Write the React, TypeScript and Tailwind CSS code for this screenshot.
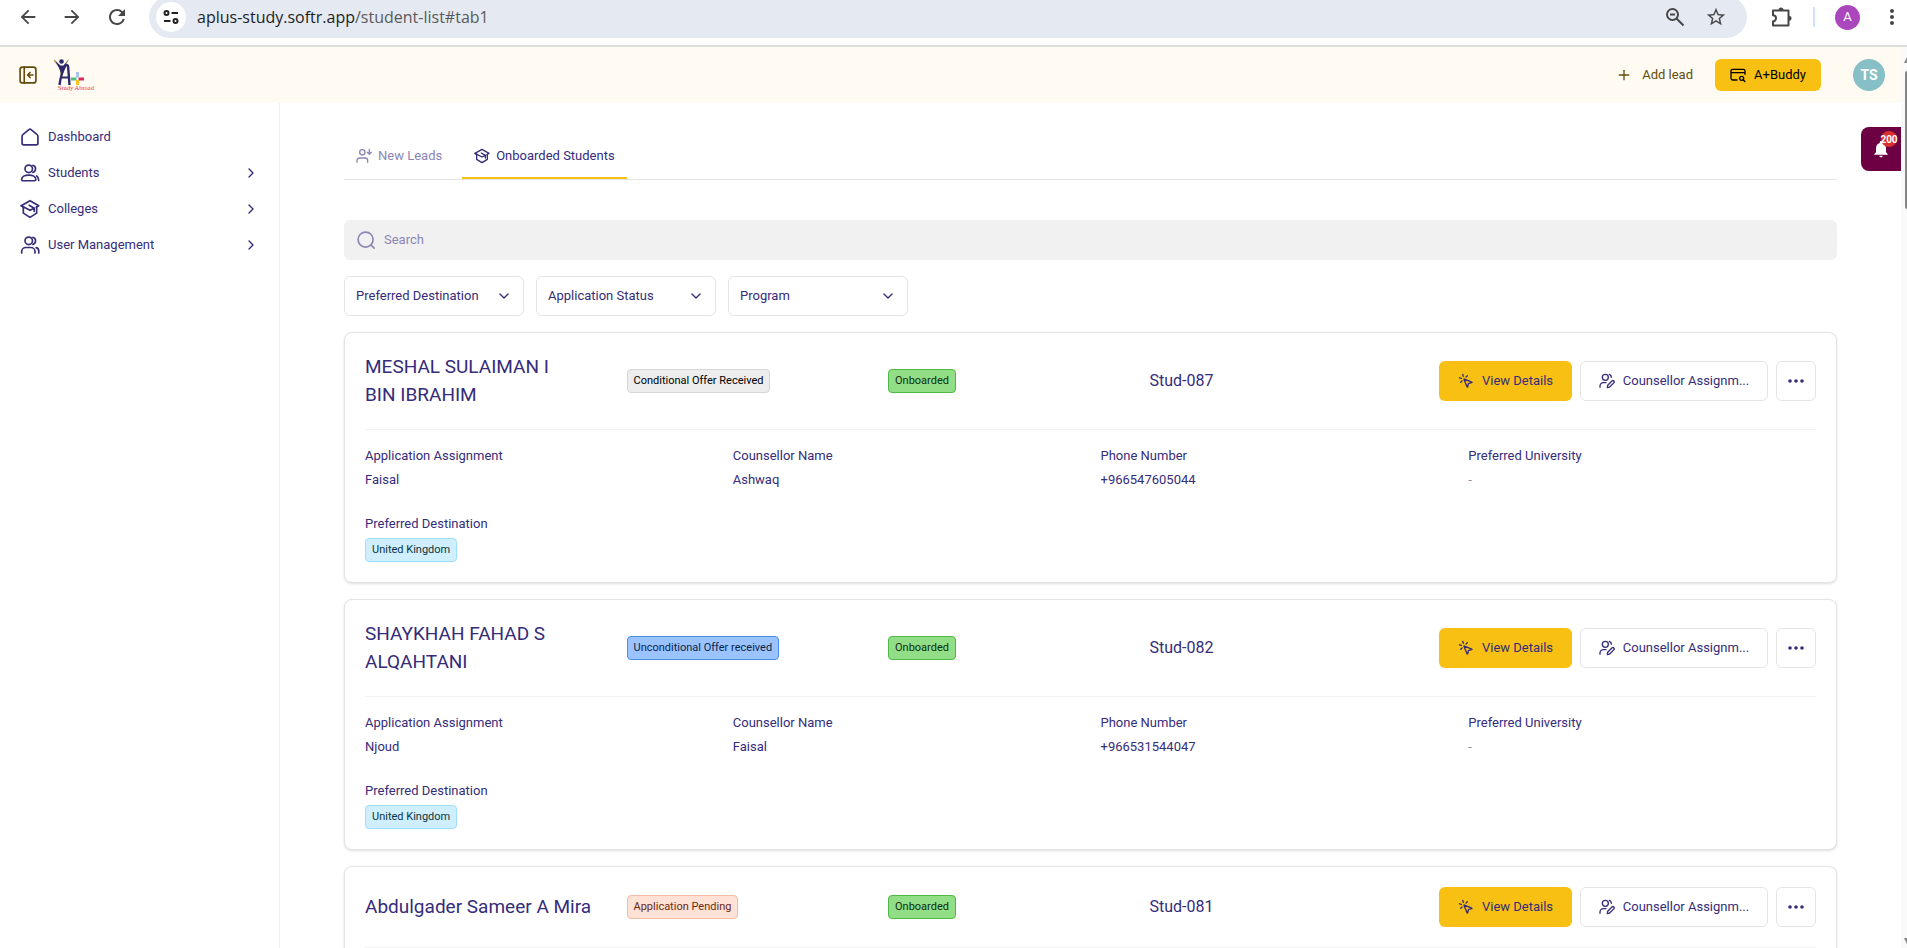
import { useState, type ReactNode } from 'react'
import { ChevronDown, ChevronRight, MousePointerClick, Plus } from 'lucide-react'
import { MdArrowBack, MdArrowForward, MdMoreVert, MdNotifications, MdRefresh, MdStarOutline } from 'react-icons/md'

type Tone = 'gray' | 'blue' | 'orange' | 'green' | 'cyan'

interface Student {
  id: string
  name: string
  status: string
  tone: Tone
  fields: [string, string][]
  destination?: string
}

const students: Student[] = [
  {
    id: 'Stud-087',
    name: 'MESHAL SULAIMAN I\nBIN IBRAHIM',
    status: 'Conditional Offer Received',
    tone: 'gray',
    fields: [
      ['Application Assignment', 'Faisal'],
      ['Counsellor Name', 'Ashwaq'],
      ['Phone Number', '+966547605044'],
      ['Preferred University', '-']
    ],
    destination: 'United Kingdom'
  },
  {
    id: 'Stud-082',
    name: 'SHAYKHAH FAHAD S\nALQAHTANI',
    status: 'Unconditional Offer received',
    tone: 'blue',
    fields: [
      ['Application Assignment', 'Njoud'],
      ['Counsellor Name', 'Faisal'],
      ['Phone Number', '+966531544047'],
      ['Preferred University', '-']
    ],
    destination: 'United Kingdom'
  },
  {
    id: 'Stud-081',
    name: 'Abdulgader Sameer A Mira',
    status: 'Application Pending',
    tone: 'orange',
    fields: []
  }
]

const tones: Record<Tone, string> = {
  gray: 'border-[#d6d6d6] bg-[#ededed] text-black',
  blue: 'border-[#4a8ee8] bg-[#9ac3ff] text-[#0c2348]',
  orange: 'border-[#f1bda6] bg-[#ffe1d5] text-[#6b2a12]',
  green: 'border-[#4fb845] bg-[#92de87] text-[#0f2c0c]',
  cyan: 'border-[#9edffa] bg-[#cfefff] text-[#0b3442]'
}

const filters = ['Preferred Destination', 'Application Status', 'Program']

interface IconProps {
  className?: string
  children?: ReactNode
}

const Icon = ({ className = 'size-5', children }: IconProps) => (
  <svg
    className={'shrink-0 ' + className}
    viewBox="0 0 24 24"
    fill="none"
    stroke="currentColor"
    strokeWidth="2"
    strokeLinecap="round"
    strokeLinejoin="round"
    aria-hidden="true"
  >
    {children}
  </svg>
)

const HomeIcon = () => (
  <Icon>
    <path d="M2.5 11.2c0-1 .4-1.8 1.2-2.4l7-5.6a2 2 0 0 1 2.6 0l7 5.6c.8.6 1.2 1.4 1.2 2.4v8.3a2 2 0 0 1-2 2h-15a2 2 0 0 1-2-2z" />
  </Icon>
)

const StudentsIcon = () => (
  <Icon>
    <circle cx="10.5" cy="7" r="4.5" />
    <path d="M15.5 2.7a4.500 4.500 0 0 1 0 8.600" />
    <path d="M2 19.500c0-3 3.600-5 8.500-5s8.500 2 8.500 5c0 1.200-.6 1.800-1.600 1.800H3.600c-1 0-1.600-.6-1.600-1.800z" />
    <path d="M20 15.500c1.500.9 2.500 2.400 2.500 5.500" />
  </Icon>
)

const UsersIcon = () => (
  <Icon>
    <circle cx="10.5" cy="7" r="4.5" />
    <path d="M15.500 2.700a4.500 4.500 0 0 1 0 8.600" />
    <path d="M2 21.500v-1.500a5 5 0 0 1 5-5h6a5 5 0 0 1 5 5v1.500" />
    <path d="M19.500 15.200a4 4 0 0 1 3 4v2.300" />
  </Icon>
)

const CapIcon = ({ className }: IconProps) => (
  <Icon className={className}>
    <path d="M4 9.500 1.500 8 12 2l10.500 6-3 1.800" />
    <path d="M1.500 8 12 13.500l5-2.500v4" />
    <path d="M11 7.500l6 3.500" />
    <path d="M4 9.500V17l8 5 8-5V9.500" />
  </Icon>
)

const NewLeadIcon = () => (
  <Icon className="size-4">
    <circle cx="9.5" cy="6.5" r="4" />
    <path d="M1.500 21.500v-2.500a4 4 0 0 1 4-4h8a4 4 0 0 1 4 4v2.500" />
    <path d="M20 2v7M17 6.500l3 3 3-3" />
  </Icon>
)

const UserPenIcon = () => (
  <Icon className="size-4">
    <circle cx="9.5" cy="6.5" r="4.5" />
    <path d="M15.500 2.200c2 .8 3 2.400 3 4.300" />
    <path d="M1.500 21.500v-2a5 5 0 0 1 5-5h4" />
    <path d="M12.500 21.800l.6-3.500 6.300-6.300a1.900 1.900 0 0 1 2.800 2.800l-6.300 6.300z" />
  </Icon>
)

const BuddyIcon = () => (
  <Icon className="size-4">
    <path d="M10.500 19.500H4a2.500 2.500 0 0 1-2.500-2.500V6A2.500 2.500 0 0 1 4 3.500h16A2.500 2.500 0 0 1 22.500 6v5M1.500 8.500h21" />
    <circle cx="17.5" cy="17" r="3" />
    <path d="M19.800 19.200l2.500 2.500" />
  </Icon>
)

const PanelIcon = () => (
  <Icon>
    <rect x="2.5" y="2.5" width="19" height="19" rx="3" />
    <path d="M7.500 2.500v19M18 12h-6M14.500 9l-3 3 3 3" />
  </Icon>
)

const SearchIcon = () => (
  <Icon>
    <circle cx="11.5" cy="11.5" r="9" />
    <path d="M18.500 18.500l3.200 3.200" />
  </Icon>
)

const Logo = () => (
  <svg className="h-8 w-10" viewBox="0 0 40 32" role="img" aria-label="A+ Study Abroad">
    <path d="M0 1l6.500 8 1 8" fill="none" stroke="#c9a76a" strokeWidth="1.5" />
    <path d="M1 1.500l5.500 5h3L14 1l-3 7.500-2.500 6-1 3.500-1-5-1.500-4z" fill="#2c2a6b" />
    <path d="M14.500.5l-4 7.500" fill="none" stroke="#c9a76a" />
    <circle cx="7.5" cy="2.5" r="2.3" fill="#2c2a6b" />
    <path
      d="M5.500 26c1-8 3.500-15 6-19.500 1.200-1 2.400-.6 2.600 1L15.500 26"
      fill="none"
      stroke="#2c2a6b"
      strokeWidth="2.4"
    />
    <path d="M7.500 18.500h7" stroke="#2c2a6b" strokeWidth="2" />
    <path d="M23.500 13v5.500" stroke="#a9c3ee" strokeWidth="3" />
    <path d="M17 20h5.500" stroke="#4fbf86" strokeWidth="3" />
    <path d="M24.500 20H30" stroke="#dc2a55" strokeWidth="3" />
    <path d="M23.500 21v5" stroke="#f8c21c" strokeWidth="3" />
    <text x="4" y="31" fontSize="6.5" fill="#e5303c" fontFamily="Liberation Serif, serif">
      Study Abroad
    </text>
  </svg>
)

const Badge = ({ tone, children }: { tone: Tone; children: ReactNode }) => (
  <span
    className={
      'inline-flex h-6 items-center justify-self-start rounded-sm border px-1.5 text-[11px] whitespace-nowrap ' +
      tones[tone]
    }
  >
    {children}
  </span>
)

const BrowserBar = () => (
  <div className="flex h-[47px] shrink-0 items-start overflow-hidden border-b-2 border-[#dcdedb] bg-white pr-[3px] text-[#474747]">
    <div className="flex h-[34px] items-center gap-[22px] pl-[17px]">
      <button aria-label="Back">
        <MdArrowBack className="size-[22px]" />
      </button>
      <button aria-label="Forward">
        <MdArrowForward className="size-[22px]" />
      </button>
      <button aria-label="Reload">
        <MdRefresh className="size-6" />
      </button>
    </div>
    <div className="-mt-1 ml-5 flex h-[42px] grow items-center rounded-full bg-[#e4e9f2] pr-5 pl-[7px]">
      <button
        aria-label="Site information"
        className="flex size-[30px] items-center justify-center rounded-full bg-white text-[#222]"
      >
        <svg className="size-4" viewBox="0 0 16 16" fill="none" stroke="currentColor" strokeWidth="2">
          <circle cx="3.5" cy="4" r="2" />
          <path d="M8.500 4H15M1 12h6.500" />
          <circle cx="12.5" cy="12" r="2" />
        </svg>
      </button>
      <span className="ml-[11px] grow font-['Open_Sans',sans-serif] text-base text-[#5a5a5a]">
        <span className="text-[#1f1f1f]">aplus-study.softr.app</span>/student-list#tab1
      </span>
      <button aria-label="Zoom" className="mr-5">
        <svg className="size-5" viewBox="0 0 20 20" fill="none" stroke="currentColor" strokeWidth="2">
          <circle cx="7.5" cy="7.5" r="5.5" />
          <path d="M5 7.500h5M11.500 11.500l7 7" />
        </svg>
      </button>
      <button aria-label="Bookmark">
        <MdStarOutline className="size-[22px]" />
      </button>
    </div>
    <div className="flex h-[34px] items-center pl-6">
      <button aria-label="Extensions">
        <svg className="size-[22px]" viewBox="0 0 22 22" fill="none">
          <path
            d="M2 4.500h15.500v15H2v-4.200a3 3 0 0 0 0-6z"
            stroke="currentColor"
            strokeWidth="2"
            strokeLinejoin="round"
          />
          <path d="M7.500 4a2.500 2.500 0 0 1 5 0zM18 9.800a2.500 2.500 0 0 1 0 5z" fill="currentColor" />
        </svg>
      </button>
      <span className="mx-5 h-5 w-0.5 bg-[#cfe0fc]"></span>
      <button className="flex size-[25px] items-center justify-center rounded-full bg-[#ab47bc] text-[13px] text-white">
        A
      </button>
      <button aria-label="Menu" className="ml-5">
        <MdMoreVert className="size-6" />
      </button>
    </div>
  </div>
)

const NavLink = ({ icon, label, nested }: { icon: ReactNode; label: string; nested?: boolean }) => (
  <a href="#" className="flex h-9 items-center gap-2 px-5">
    {icon}
    <span className="grow">{label}</span>
    {nested && <ChevronRight className="size-4" />}
  </a>
)

const StudentCard = ({ student }: { student: Student }) => (
  <article className="shrink-0 rounded-lg border border-[#e4e4e4] bg-white px-5 shadow-sm">
    <div className="flex items-center gap-12 border-b border-[#f3f3f3] py-5">
      <div className="grid grow grid-cols-4 items-center gap-5">
        <h2 className="text-[19px] leading-7 whitespace-pre">{student.name}</h2>
        <Badge tone={student.tone}>{student.status}</Badge>
        <Badge tone="green">Onboarded</Badge>
        <span className="text-base">{student.id}</span>
      </div>
      <div className="flex gap-2">
        <button className="flex h-10 w-[133px] items-center justify-center gap-2 rounded-md bg-[#f8c013]">
          <MousePointerClick className="size-4" />
          View Details
        </button>
        <button className="flex h-10 w-[188px] items-center justify-center gap-2 rounded-md border border-[#e4e4e4]">
          <UserPenIcon />
          Counsellor Assignm...
        </button>
        <button
          aria-label="More actions"
          className="flex size-10 items-center justify-center rounded-md border border-[#e4e4e4]"
        >
          <svg className="size-4" viewBox="0 0 16 16" fill="currentColor">
            <circle cx="2" cy="8" r="1.8" />
            <circle cx="8" cy="8" r="1.8" />
            <circle cx="14" cy="8" r="1.8" />
          </svg>
        </button>
      </div>
    </div>
    <dl className="grid grid-cols-4 gap-x-5 gap-y-6 pt-4 pb-5 leading-5">
      {student.fields.map(([label, value]) => (
        <div key={label} className="flex flex-col gap-1">
          <dt>{label}</dt>
          <dd className={value === '-' ? 'text-[#8d88b0]' : ''}>{value}</dd>
        </div>
      ))}
      {student.destination && (
        <div className="flex flex-col gap-1">
          <dt>Preferred Destination</dt>
          <dd className="flex">
            <Badge tone="cyan">{student.destination}</Badge>
          </dd>
        </div>
      )}
    </dl>
  </article>
)

function App() {
  const [tab, setTab] = useState('onboarded')
  const [search, setSearch] = useState('')

  const tabClass = (name: string): string =>
    'flex h-11 items-center gap-1.5 border-b-2 px-3 ' +
    (tab === name ? 'border-[#f8c013]' : 'border-transparent text-[#8b86b3]')

  return (
    <div className="flex h-screen flex-col overflow-hidden bg-white font-[Roboto,sans-serif] text-[13px] text-[#352c7a]">
      <BrowserBar />
      <div className="flex min-h-0 grow">
        <div className="relative flex min-w-0 grow flex-col">
          <header className="flex h-14 shrink-0 items-center bg-[#fffbf2] pr-4 pl-[18px] text-[#634c0c]">
            <button aria-label="Collapse menu">
              <PanelIcon />
            </button>
            <a href="#" className="ml-4 grow">
              <Logo />
            </a>
            <button className="flex items-center gap-2.5">
              <Plus className="size-4" />
              Add lead
            </button>
            <button className="ml-[22px] flex h-8 w-[106px] items-center justify-center gap-2 rounded-md bg-[#f8c013] text-black">
              <BuddyIcon />
              A+Buddy
            </button>
            <button className="ml-8 flex size-8 items-center justify-center rounded-full bg-[#86c0c6] text-sm font-bold text-white">
              TS
            </button>
          </header>

          <div className="flex min-h-0 grow">
            <nav className="w-[280px] shrink-0 border-r border-[#efefef] pt-4">
              <NavLink icon={<HomeIcon />} label="Dashboard" />
              <NavLink icon={<StudentsIcon />} label="Students" nested />
              <NavLink icon={<CapIcon />} label="Colleges" nested />
              <NavLink icon={<UsersIcon />} label="User Management" nested />
            </nav>

            <main className="flex min-w-0 grow flex-col gap-4 px-16 pt-8">
              <div className="mb-6 flex shrink-0 gap-2 border-b border-[#e4e4e4]" role="tablist">
                <button
                  role="tab"
                  aria-selected={tab === 'leads'}
                  className={tabClass('leads')}
                  onClick={() => setTab('leads')}
                >
                  <NewLeadIcon />
                  New Leads
                </button>
                <button
                  role="tab"
                  aria-selected={tab === 'onboarded'}
                  className={tabClass('onboarded')}
                  onClick={() => setTab('onboarded')}
                >
                  <CapIcon className="size-4" />
                  Onboarded Students
                </button>
              </div>

              <label className="flex h-10 shrink-0 items-center gap-2 rounded-md bg-[#f1f1f1] px-3 text-[#8b86b3]">
                <SearchIcon />
                <input
                  type="search"
                  aria-label="Search"
                  placeholder="Search"
                  className="grow bg-transparent outline-none placeholder:text-[#8b86b3]"
                  value={search}
                  onChange={(e) => setSearch(e.target.value)}
                />
              </label>

              <div className="flex shrink-0 gap-3">
                {filters.map((name) => (
                  <div key={name} className="relative flex w-[180px] items-center">
                    <select
                      aria-label={name}
                      className="h-10 w-full appearance-none rounded-md border border-[#e4e4e4] bg-white pr-8 pl-[11px]"
                    >
                      <option>{name}</option>
                    </select>
                    <ChevronDown className="pointer-events-none absolute right-3 size-4" />
                  </div>
                ))}
              </div>

              {students.map((student) => (
                <StudentCard key={student.id} student={student} />
              ))}
            </main>
          </div>

          <button
            aria-label="Notifications"
            className="absolute top-20 right-0 flex h-11 w-10 items-center justify-center rounded-l-lg bg-[#6c0042] text-white"
          >
            <MdNotifications className="size-5" />
            <span className="absolute top-1 right-1 flex size-4 items-center justify-center rounded-full bg-[#d93030] text-[10px] font-bold">
              200
            </span>
          </button>
        </div>

        <div className="flex w-1.5 shrink-0 flex-col items-end bg-[#fafafa] pt-2.5 pb-1">
          <svg className="h-1.5 w-[3px]" viewBox="0 0 3 6" fill="#858585">
            <path d="M3 0v6H0z" />
          </svg>
          <span className="mt-2 h-[138px] w-0.5 rounded-l-sm bg-[#858585]"></span>
          <svg className="mt-auto h-1.5 w-[3px]" viewBox="0 0 3 6" fill="#858585">
            <path d="M0 0h3v6z" />
          </svg>
        </div>
      </div>
    </div>
  )
}

export default App
